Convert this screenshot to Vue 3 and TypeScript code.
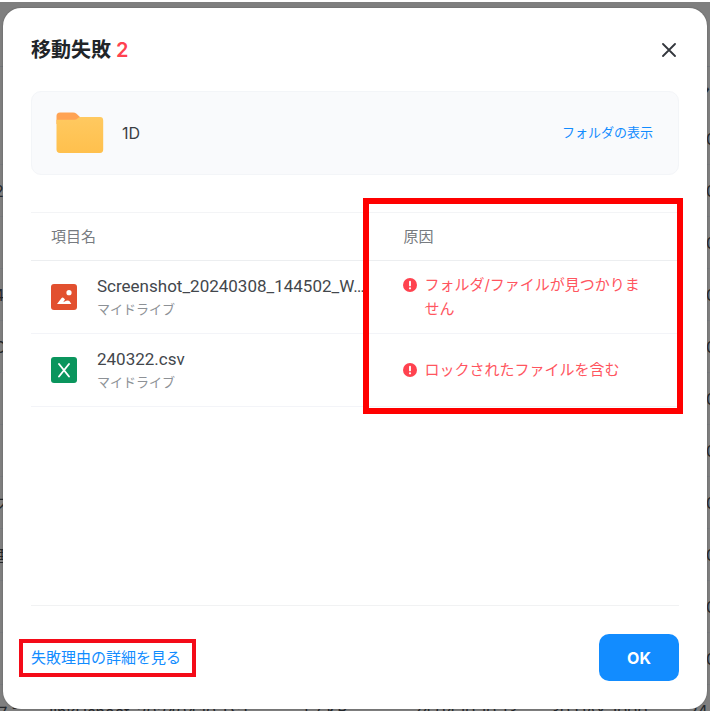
<script setup lang="ts">
interface FailedItem {
  name: string
  location: string
  kind: 'image' | 'sheet'
  reason: string
}

interface DriveRow {
  name: string
  size: string
  date: string
  type: string
  end: string
}

const failedItems: FailedItem[] = [
  {
    name: 'Screenshot_20240308_144502_W…',
    location: 'マイドライブ',
    kind: 'image',
    reason: 'フォルダ/ファイルが見つかりません',
  },
  {
    name: '240322.csv',
    location: 'マイドライブ',
    kind: 'sheet',
    reason: 'ロックされたファイルを含む',
  },
]

const row = (name: string): DriveRow => ({ name, size: '', date: '', type: '', end: '0' })

const driveRows: DriveRow[] = [
  row(''),
  row('2'),
  row(''),
  row('4'),
  row('O'),
  row(''),
  row(''),
  row('ス'),
  row('画'),
  row(''),
  row(''),
  {
    name: 'スニー_linkHshoot_202404.10.TST',
    size: '1.7 KB',
    date: '24.04.10 10:13',
    type: '30 DAY 1000',
    end: '24.0',
  },
]
</script>

<template>
  <div class="page">
    <div class="drive" aria-hidden="true">
      <div class="drive-bar"></div>
      <div class="drive-head"><span>ン</span></div>
      <div v-for="(r, i) in driveRows" :key="i" class="drive-row">
        <span>{{ r.name }}</span>
        <span>{{ r.size }}</span>
        <span>{{ r.date }}</span>
        <span>{{ r.type }}</span>
        <span :class="{ last: r.size }">{{ r.end }}</span>
      </div>
    </div>

    <main class="dialog" role="dialog" aria-labelledby="dialog-title">
      <header class="head">
        <h1 id="dialog-title">移動失敗 <span class="count">{{ failedItems.length }}</span></h1>
        <button class="close" type="button" aria-label="閉じる">
          <svg width="14" height="14" viewBox="0 0 14 14">
            <path d="M1 1 13 13M13 1 1 13" stroke="#33373d" stroke-width="1.8" stroke-linecap="round" />
          </svg>
        </button>
      </header>

      <section class="folder">
        <svg class="folder-icon" width="48" height="42" viewBox="0 0 48 42">
          <defs>
            <linearGradient id="folder-fill" x1="0" y1="0" x2="0" y2="1">
              <stop offset="0" stop-color="#ffc960" />
              <stop offset="1" stop-color="#ffc04d" />
            </linearGradient>
          </defs>
          <path d="M0.5 12V4Q0.5 0.5 4 0.5H17Q19 0.5 20.5 1.8L24.5 5.5V12Z" fill="#ffa353" />
          <path d="M0.5 7.8H18.5Q20.4 7.8 21.5 6.4Q23 5 25 5H44Q47.2 5 47.2 8.4V37.6Q47.2 41 44 41H4Q0.5 41 0.5 37.6Z" fill="url(#folder-fill)" />
        </svg>
        <span class="folder-name">1D</span>
        <a class="folder-link" href="#">フォルダの表示</a>
      </section>

      <div class="list">
        <table>
          <thead>
            <tr>
              <th scope="col" class="col-name">項目名</th>
              <th scope="col" class="col-reason">原因</th>
            </tr>
          </thead>
          <tbody>
            <tr v-for="item in failedItems" :key="item.name">
              <td class="col-name">
                <div class="item">
                  <svg v-if="item.kind === 'image'" class="file-icon" width="26" height="26" viewBox="0 0 26 26">
                    <rect width="26" height="26" rx="3" fill="#e2502f" />
                    <circle cx="18" cy="8.7" r="2.6" fill="#fff" />
                    <path d="M6 20 10.4 14.2Q11.6 12.8 12.9 14.2L14 15.6 12.2 18.3 15.2 16.8Q17.2 15.8 18.6 17.2L20.3 20Z" fill="#fff" />
                  </svg>
                  <svg v-else class="file-icon" width="26" height="26" viewBox="0 0 26 26">
                    <rect width="26" height="26" rx="3" fill="#0a955d" />
                    <path d="M8 7 18 19.5M18 7 8 19.5" stroke="#fff" stroke-width="1.9" stroke-linecap="round" />
                  </svg>
                  <div class="item-text">
                    <div class="item-name">{{ item.name }}</div>
                    <div class="item-location">{{ item.location }}</div>
                  </div>
                </div>
              </td>
              <td class="col-reason">
                <div class="reason">
                  <svg class="warn" width="14" height="24" viewBox="0 0 14 24">
                    <circle cx="7" cy="12" r="7" fill="#ff424f" />
                    <path d="M7 8.6V12.4" stroke="#fff" stroke-width="1.9" stroke-linecap="round" />
                    <circle cx="7" cy="15.3" r="1.1" fill="#fff" />
                  </svg>
                  <span>{{ item.reason }}</span>
                </div>
              </td>
            </tr>
          </tbody>
        </table>
        <div class="list-mark"></div>
      </div>

      <footer class="foot">
        <a class="detail" href="#">失敗理由の詳細を見る</a>
        <button class="ok" type="button">OK</button>
      </footer>
    </main>
  </div>
</template>

<style>
body {
  margin: 0;
  background: #fff;
}
</style>

<style scoped>
* {
  box-sizing: border-box;
}

.page {
  position: relative;
  display: flex;
  min-height: 100vh;
  padding: 8px 3px 2px;
  overflow: hidden;
  font-family: Inter, "Noto Sans CJK JP", sans-serif;
}

.drive {
  position: absolute;
  inset: 2px 0 0;
  overflow: hidden;
  background: #7f7f7f;
  color: #25282c;
  font-size: 16px;
}

.drive-bar {
  height: 65px;
  border-bottom: 1px solid #72757a;
}

.drive-head {
  display: flex;
  align-items: center;
  justify-content: flex-end;
  height: 46px;
  font-weight: 700;
}

.drive-row {
  display: grid;
  grid-template-columns: 308px 110px 138px 1fr 6px;
  align-items: center;
  height: 52px;
  border-bottom: 1px solid #787a7d;
  white-space: nowrap;
}

.drive-row span {
  margin-left: -6px;
}

.drive-row span:last-child {
  margin-left: 2px;
}

.drive-row .last:last-child {
  margin-left: -16px;
}

.dialog {
  position: relative;
  display: flex;
  flex: 1;
  flex-direction: column;
  min-width: 0;
  padding: 0 28px 28px;
  border-radius: 18px;
  background: #fff;
  box-shadow: 0 0 2px rgba(0, 0, 0, 0.3);
}

.head {
  display: flex;
  align-items: center;
  justify-content: space-between;
  height: 83px;
}

h1 {
  margin: 0;
  color: #212529;
  font-size: 20px;
  font-weight: 600;
  line-height: 28px;
}

.count {
  color: #ff424f;
}

.close {
  display: grid;
  place-items: center;
  width: 20px;
  height: 20px;
  padding: 0;
  border: 0;
  background: none;
}

.folder {
  display: flex;
  align-items: center;
  height: 84px;
  padding: 0 25px 0 24px;
  border: 1px solid #f3f5f8;
  border-radius: 10px;
  background: #f9fafc;
}

.folder-name {
  margin-left: 18px;
  color: #3a3e43;
  font-size: 16px;
}

.folder-link {
  margin-left: auto;
  padding-bottom: 4px;
  font-size: 13px;
}

a {
  color: #128cff;
  text-decoration: none;
}

.list {
  position: relative;
  margin-top: 37px;
}

table {
  width: 100%;
  table-layout: fixed;
  border-spacing: 0;
  border-top: 1px solid #f3f4f6;
}

th,
td {
  padding: 0;
  border-bottom: 1px solid #f3f4f8;
  text-align: left;
}

th {
  height: 48px;
  border-color: #eceef0;
  color: #777b80;
  font-size: 15px;
  font-weight: 400;
  line-height: 22px;
}

td {
  height: 73px;
}

.col-name {
  width: 51.3%;
  padding-left: 20px;
}

.col-reason {
  padding: 0 28px 0 40px;
}

.item {
  display: flex;
  align-items: center;
  gap: 20px;
}

.file-icon,
.warn {
  flex: none;
}

.item-text {
  white-space: nowrap;
}

.item-name {
  color: #43474c;
  font-family: Roboto, "Noto Sans CJK JP", sans-serif;
  font-size: 17px;
  line-height: 24px;
}

.item-location {
  color: #8d9196;
  font-size: 13px;
  line-height: 22px;
}

.reason {
  display: flex;
  gap: 7px;
  color: #ff5560;
  font-size: 15px;
  line-height: 24px;
}

.list-mark {
  position: absolute;
  inset: -14px -4px -7px 51.3%;
  border: 6px solid #f00;
  pointer-events: none;
}

.foot {
  display: flex;
  align-items: center;
  justify-content: space-between;
  height: 76px;
  margin-top: auto;
  padding-top: 28px;
  border-top: 1px solid #f1f2f3;
}

.detail {
  position: relative;
  font-size: 15px;
  line-height: 22px;
}

.detail::after {
  content: "";
  position: absolute;
  inset: -8px -15px -8px -12px;
  border: 4px solid #f40b18;
}

.ok {
  width: 80px;
  height: 47px;
  padding: 0;
  border: 0;
  border-radius: 10px;
  background: #128cff;
  color: #fff;
  font-family: inherit;
  font-size: 16px;
  font-weight: 700;
}
</style>
